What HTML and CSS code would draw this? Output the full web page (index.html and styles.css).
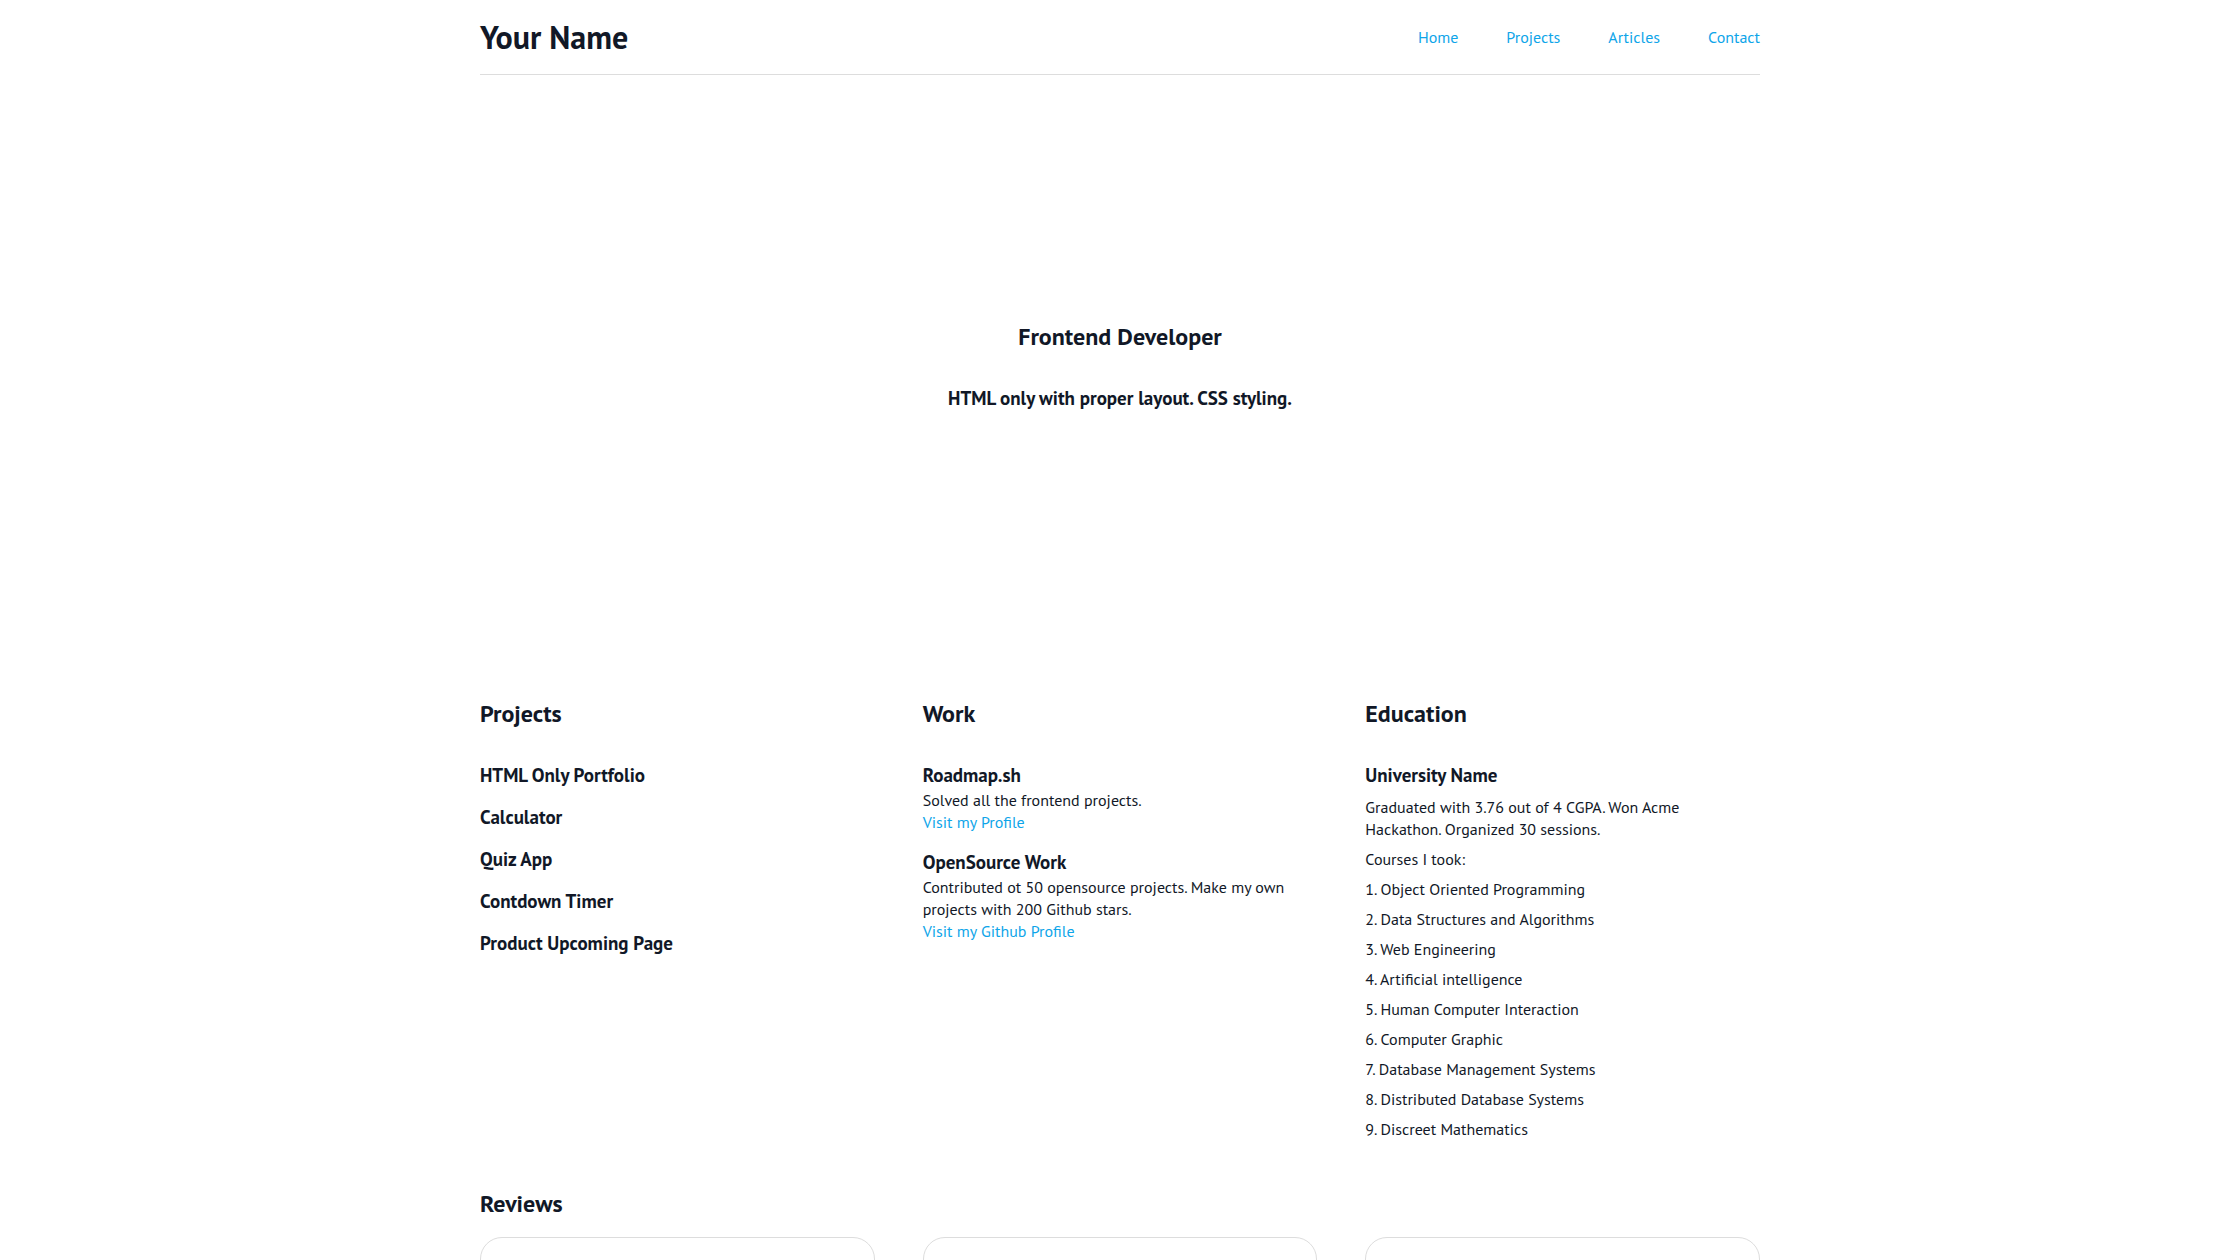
FILE: index.html
```html
<!DOCTYPE html>
<html lang="en">
<head>
<meta charset="utf-8">
<title>Your Name</title>
<link rel="stylesheet" href="styles.css">
</head>
<body>
<div class="page">
  <header class="header">
    <h1 class="brand">Your Name</h1>
    <nav class="nav">
      <a href="#">Home</a>
      <a href="#">Projects</a>
      <a href="#">Articles</a>
      <a href="#">Contact</a>
    </nav>
  </header>

  <section class="hero">
    <h2 class="hero-title">Frontend Developer</h2>
    <p class="hero-sub">HTML only with proper layout. CSS styling.</p>
  </section>

  <section class="columns">
    <div class="col">
      <h2 class="sec-title">Projects</h2>
      <ul class="proj-list">
        <li>HTML Only Portfolio</li>
        <li>Calculator</li>
        <li>Quiz App</li>
        <li>Contdown Timer</li>
        <li>Product Upcoming Page</li>
      </ul>
    </div>
    <div class="col">
      <h2 class="sec-title">Work</h2>
      <div class="work-list">
        <div class="work-item">
          <h3 class="item-title">Roadmap.sh</h3>
          <p class="text">Solved all the frontend projects.</p>
          <a class="link" href="#">Visit my Profile</a>
        </div>
        <div class="work-item">
          <h3 class="item-title">OpenSource Work</h3>
          <p class="text">Contributed ot 50 opensource projects. Make my own projects with 200 Github stars.</p>
          <a class="link" href="#">Visit my Github Profile</a>
        </div>
      </div>
    </div>
    <div class="col">
      <h2 class="sec-title">Education</h2>
      <div class="edu">
        <h3 class="item-title">University Name</h3>
        <p class="text edu-summary">Graduated with 3.76 out of 4 CGPA. Won Acme Hackathon. Organized 30 sessions.</p>
        <p class="text">Courses I took:</p>
        <p class="text">1. Object Oriented Programming</p>
        <p class="text">2. Data Structures and Algorithms</p>
        <p class="text">3. Web Engineering</p>
        <p class="text">4. Artificial intelligence</p>
        <p class="text">5. Human Computer Interaction</p>
        <p class="text">6. Computer Graphic</p>
        <p class="text">7. Database Management Systems</p>
        <p class="text">8. Distributed Database Systems</p>
        <p class="text">9. Discreet Mathematics</p>
      </div>
    </div>
  </section>

  <section class="reviews">
    <h2 class="sec-title">Reviews</h2>
    <div class="cards">
      <div class="card"></div>
      <div class="card"></div>
      <div class="card"></div>
    </div>
  </section>
</div>
</body>
</html>
```

FILE: styles.css
```css
* { box-sizing: border-box; }

html, body {
  margin: 0;
  padding: 0;
  background: #ffffff;
}

body {
  font-family: "PT Sans", Lato, "Noto Sans", sans-serif;
  color: #111827;
}

.page {
  width: 1280px;
  margin: 0 auto;
}

.header {
  display: flex;
  align-items: center;
  justify-content: space-between;
  height: 75px;
  border-bottom: 1px solid #dddddd;
}

.brand {
  margin: 0;
  font-size: 32px;
  line-height: 40px;
  font-weight: 700;
  letter-spacing: 0;
}

.nav {
  display: flex;
  gap: 48px;
}

.nav a {
  color: #0ea5e9;
  text-decoration: none;
  font-size: 16px;
  line-height: 22px;
}

.hero {
  display: flex;
  flex-direction: column;
  align-items: center;
  padding: 246px 0 286px;
}

.hero-title {
  margin: 0;
  font-size: 24px;
  line-height: 32px;
  font-weight: 700;
}

.hero-sub {
  margin: 31px 0 0;
  font-size: 19px;
  line-height: 28px;
  font-weight: 700;
}

.columns {
  display: grid;
  grid-template-columns: repeat(3, 1fr);
  gap: 48px;
}

.sec-title {
  margin: 0;
  font-size: 24px;
  line-height: 32px;
  font-weight: 700;
}

.proj-list {
  list-style: none;
  margin: 31px 0 0;
  padding: 0;
  display: flex;
  flex-direction: column;
  gap: 14px;
}

.proj-list li {
  font-size: 19px;
  line-height: 28px;
  font-weight: 700;
}

.work-list {
  margin-top: 31px;
  display: flex;
  flex-direction: column;
  gap: 15px;
}

.work-item {
  display: flex;
  flex-direction: column;
}

.item-title {
  margin: 0;
  font-size: 19px;
  line-height: 28px;
  font-weight: 700;
}

.text {
  margin: 0;
  font-size: 16px;
  line-height: 22px;
}

.link {
  color: #0ea5e9;
  text-decoration: none;
  font-size: 16px;
  line-height: 22px;
}

.edu {
  margin-top: 31px;
  display: flex;
  flex-direction: column;
  gap: 8px;
}

.edu .item-title {
  margin-bottom: -1px;
}

.edu-summary {
  max-width: 340px;
}

.reviews {
  margin-top: 48px;
}

.cards {
  margin-top: 17px;
  display: grid;
  grid-template-columns: repeat(3, 1fr);
  gap: 48px;
}

.card {
  height: 220px;
  border: 1px solid #dddddd;
  border-radius: 22px;
}
```
